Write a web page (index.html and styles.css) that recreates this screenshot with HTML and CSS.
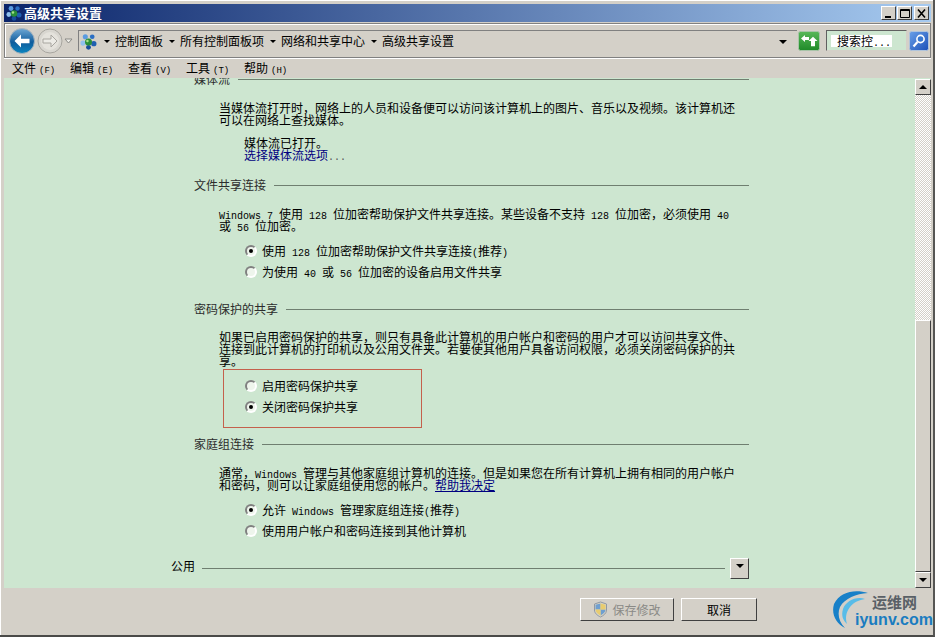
FILE: index.html
```html
<!DOCTYPE html>
<html lang="zh-CN">
<head>
  <meta charset="utf-8">
  <title>高级共享设置</title>
  <link rel="stylesheet" href="styles.css">
</head>
<body>
<div class="window">

  <div class="titlebar">
    <svg class="netIcon" width="16" height="16" viewBox="0 0 16 16">
      <circle cx="5" cy="3.500" r="2.400" fill="#5a9be0"/>
      <circle cx="11.500" cy="3.500" r="2.200" fill="#2b6fc4"/>
      <circle cx="2.800" cy="9.500" r="2.400" fill="#8fc0ee"/>
      <circle cx="13" cy="10" r="2.500" fill="#1f5fb0"/>
      <circle cx="8" cy="13.500" r="2.300" fill="#174f9c"/>
      <circle cx="8" cy="8.500" r="3.300" fill="#2a8f3a"/>
      <circle cx="7" cy="7.500" r="1.200" fill="#a6e08a"/>
    </svg>
    <span class="titleText">高级共享设置</span>
    <div class="winBtns">
      <span class="winBtn">
        <svg width="12" height="11" viewBox="0 0 12 11"><rect x="2" y="8" width="6" height="2" fill="#000"/></svg>
      </span>
      <span class="winBtn">
        <svg width="12" height="11" viewBox="0 0 12 11"><path d="M1.500 1.500h9v8h-9z M1 2.500h10" fill="none" stroke="#000"/></svg>
      </span>
      <span class="winBtn closeBtn">
        <svg width="12" height="11" viewBox="0 0 12 11"><path d="M2 1.500l7 8M9 1.500l-7 8" fill="none" stroke="#000" stroke-width="1.600"/></svg>
      </span>
    </div>
  </div>

  <div class="navbar">
    <svg class="backBtn" width="26" height="26" viewBox="0 0 26 26">
      <defs>
        <linearGradient id="blueBall" x1="0" y1="0" x2="0" y2="1">
          <stop offset="0" stop-color="#6fa8d4"/>
          <stop offset="0.55" stop-color="#0f5c9c"/>
          <stop offset="1" stop-color="#0c86c0"/>
        </linearGradient>
      </defs>
      <circle cx="13" cy="13" r="12.500" fill="url(#blueBall)" stroke="#a9b4bc"/>
      <path d="M5.500 13l6.500-6.500v4.300h8.500v4.400h-8.500v4.300z" fill="#fff"/>
    </svg>
    <svg class="fwdBtn" width="26" height="26" viewBox="0 0 26 26">
      <circle cx="13" cy="13" r="12" fill="#d8d6d0" stroke="#a8a6a0"/>
      <circle cx="13" cy="13" r="9" fill="#e4e2dc"/>
      <path d="M20 13l-6-6v4H6v4h8v4z" fill="#ecebe6" stroke="#a8a6a0"/>
    </svg>
    <svg class="histArrow" width="9" height="6" viewBox="0 0 9 6"><path d="M1 1l3.500 4L8 1z" fill="#f0efea" stroke="#8a8a86"/></svg>

    <div class="address">
      <svg class="netIcon" width="17" height="17" viewBox="0 0 16 16">
        <circle cx="5" cy="3.500" r="2.400" fill="#5a9be0"/>
        <circle cx="11.500" cy="3.500" r="2.200" fill="#2b6fc4"/>
        <circle cx="2.800" cy="9.500" r="2.400" fill="#8fc0ee"/>
        <circle cx="13" cy="10" r="2.500" fill="#1f5fb0"/>
        <circle cx="8" cy="13.500" r="2.300" fill="#174f9c"/>
        <circle cx="8" cy="8.500" r="3.300" fill="#2a8f3a"/>
        <circle cx="7" cy="7.500" r="1.200" fill="#a6e08a"/>
      </svg>
      <span class="crumbArrow first"></span><span class="crumb">控制面板</span>
      <span class="crumbArrow"></span><span class="crumb">所有控制面板项</span>
      <span class="crumbArrow"></span><span class="crumb">网络和共享中心</span>
      <span class="crumbArrow"></span><span class="crumb">高级共享设置</span>
      <span class="addrDrop"></span>
    </div>

    <svg class="refresh" width="22" height="20" viewBox="0 0 22 20">
      <defs>
        <linearGradient id="greenBtn" x1="0" y1="0" x2="0" y2="1">
          <stop offset="0" stop-color="#58b858"/>
          <stop offset="1" stop-color="#1f8a28"/>
        </linearGradient>
      </defs>
      <rect x="0.500" y="0.500" width="21" height="19" rx="2" fill="url(#greenBtn)" stroke="#a8c4a8"/>
      <path d="M3 7.500l4-3.500v2h4v3H7v2z" fill="#fff"/>
      <path d="M15 6l4.500 4.500H17V16h-4v-5.500h-2.500z" fill="#fff" transform="translate(0 0) scale(1 .95)"/>
    </svg>

    <div class="search"><span class="searchText">搜索控<span class="en">...</span></span></div>
    <svg class="searchBtn" width="20" height="20" viewBox="0 0 20 20">
      <defs>
        <linearGradient id="blueBtn" x1="0" y1="0" x2="1" y2="1">
          <stop offset="0" stop-color="#6aa0e8"/>
          <stop offset="1" stop-color="#1c50b8"/>
        </linearGradient>
      </defs>
      <rect x="0.500" y="0.500" width="19" height="19" rx="2" fill="url(#blueBtn)" stroke="#b0c4dc"/>
      <circle cx="11.500" cy="8" r="3.600" fill="#3a78d0" stroke="#fff" stroke-width="1.600"/>
      <path d="M8.500 11l-4 4.500" stroke="#fff" stroke-width="2.200"/>
    </svg>
  </div>

  <div class="menubar">
    <span class="menuItem">文件<span class="en key">(F)</span></span>
    <span class="menuItem">编辑<span class="en key">(E)</span></span>
    <span class="menuItem">查看<span class="en key">(V)</span></span>
    <span class="menuItem">工具<span class="en key">(T)</span></span>
    <span class="menuItem">帮助<span class="en key">(H)</span></span>
  </div>

  <div class="main">
    <div class="content">
      <div class="page">

        <section class="section">
          <div class="secHead"><span>媒体流</span><i class="rule"></i></div>
          <p class="desc">当媒体流打开时，网络上的人员和设备便可以访问该计算机上的图片、音乐以及视频。该计算机还<br>可以在网络上查找媒体。</p>
          <p class="status">媒体流已打开。<br><a class="link">选择媒体流选项<span class="en">...</span></a></p>
        </section>

        <section class="section">
          <div class="secHead"><span>文件共享连接</span><i class="rule"></i></div>
          <p class="desc"><span class="en">Windows 7 </span>使用<span class="en"> 128 </span>位加密帮助保护文件共享连接。某些设备不支持<span class="en"> 128 </span>位加密，必须使用<span class="en"> 40</span><br>或<span class="en"> 56 </span>位加密。</p>
          <div class="radios">
            <div class="radioRow"><span class="radio on"></span><span>使用<span class="en"> 128 </span>位加密帮助保护文件共享连接<span class="en">(</span>推荐<span class="en">)</span></span></div>
            <div class="radioRow"><span class="radio"></span><span>为使用<span class="en"> 40 </span>或<span class="en"> 56 </span>位加密的设备启用文件共享</span></div>
          </div>
        </section>

        <section class="section">
          <div class="secHead"><span>密码保护的共享</span><i class="rule"></i></div>
          <p class="desc tight">如果已启用密码保护的共享，则只有具备此计算机的用户帐户和密码的用户才可以访问共享文件、<br>连接到此计算机的打印机以及公用文件夹。若要使其他用户具备访问权限，必须关闭密码保护的共<br>享。</p>
          <div class="radios marked">
            <div class="radioRow"><span class="radio"></span><span>启用密码保护共享</span></div>
            <div class="radioRow"><span class="radio on"></span><span>关闭密码保护共享</span></div>
            <div class="redBox"></div>
          </div>
        </section>

        <section class="section">
          <div class="secHead"><span>家庭组连接</span><i class="rule"></i></div>
          <p class="desc">通常，<span class="en">Windows </span>管理与其他家庭组计算机的连接。但是如果您在所有计算机上拥有相同的用户帐户<br>和密码，则可以让家庭组使用您的帐户。<a class="link under">帮助我决定</a></p>
          <div class="radios">
            <div class="radioRow"><span class="radio on"></span><span>允许<span class="en"> Windows </span>管理家庭组连接<span class="en">(</span>推荐<span class="en">)</span></span></div>
            <div class="radioRow"><span class="radio"></span><span>使用用户帐户和密码连接到其他计算机</span></div>
          </div>
        </section>

        <div class="groupRow">
          <span>公用</span><i class="rule"></i>
          <span class="expand"><span class="arrowDown"></span></span>
        </div>
      </div>
    </div>

    <div class="scrollbar">
      <span class="scrollBtn"><span class="arrowUp"></span></span>
      <div class="track"></div>
      <div class="thumb"></div>
      <span class="scrollBtn"><span class="arrowDown"></span></span>
    </div>
  </div>

  <div class="footer">
    <button class="btn saveBtn" disabled>
      <svg width="15" height="17" viewBox="0 0 15 17">
        <path d="M7.500 1l6 2v6c0 3.500-3 5.500-6 7-3-1.500-6-3.500-6-7V3z" fill="#d8d4c4" stroke="#8f98a4"/>
        <path d="M7.500 2.500v6h-5V3.800z" fill="#6f9fd0"/>
        <path d="M7.500 8.500h5c0 2.800-2.500 4.600-5 6z" fill="#6f9fd0"/>
        <path d="M7.500 2.500l5 1.300v4.700h-5z" fill="#e8cc70"/>
        <path d="M7.500 8.500v6c-2.500-1.400-5-3.200-5-6z" fill="#e8cc70"/>
      </svg>
      保存修改
    </button>
    <button class="btn cancelBtn">取消</button>
  </div>

  <div class="watermark">
    <svg class="wmArc" width="44" height="44" viewBox="0 0 44 44">
      <path d="M36 3C24-1 8 1 2 14c-3 10 2 20 11 24C7 32 5 24 8 17 13 8 24 4 36 3z" fill="#1880c8"/>
      <path d="M33 9c-9-3-19 2-22 10-2 7 0 11 4 15-2-6-1-12 3-17 4-5 9-7 15-8z" fill="#58bce8"/>
    </svg>
    <span class="wmCn">运维网</span>
    <span class="wmEn">iyunv.com</span>
  </div>
</div>
</body>
</html>
```

FILE: styles.css
```css
html, body {
  margin: 0;
  padding: 0;
  height: 100%;
}

body {
  background: #d4d0c8;
  color: #000;
  font-family: "Noto Sans CJK SC", "Liberation Sans", sans-serif;
  font-size: 12px;
  line-height: 12px;
  overflow: hidden;
}

.en {
  font-family: "Liberation Mono", monospace;
  font-size: 10px;
  line-height: 0;
}

.window {
  position: relative;
  display: flex;
  flex-direction: column;
  width: 935px;
  height: 637px;
  box-sizing: border-box;
  padding: 4px 2px 3px 4px;
  border-bottom: 2px solid #4a4a48;
  border-right: 2px solid #565654;
  box-shadow: inset 1px 1px 0 #fff;
}

/* title bar */
.titlebar {
  display: flex;
  align-items: center;
  height: 18px;
  flex: none;
  padding-left: 2px;
  background: linear-gradient(to right, #0a246a, #a6caf0);
}

.titleText {
  margin-left: 2px;
  color: #fff;
  font-size: 13px;
  font-weight: bold;
}

.winBtns {
  display: flex;
  margin-left: auto;
  margin-right: 2px;
  gap: 1px;
}

.winBtn {
  display: flex;
  align-items: center;
  justify-content: center;
  width: 15px;
  height: 14px;
  box-sizing: border-box;
  background: #d4d0c8;
  border: 1px solid;
  border-color: #fff #404040 #404040 #fff;
}

.closeBtn {
  margin-left: 1px;
}

/* address row */
.navbar {
  display: flex;
  align-items: center;
  height: 35px;
  flex: none;
  margin-top: 1px;
  box-sizing: border-box;
  padding-left: 4px;
  border: 1px solid #808080;
  box-shadow: inset 1px 1px 0 #fff, 0 1px 0 #fff;
}

.fwdBtn {
  margin-left: 2px;
}

.histArrow {
  margin-left: 1px;
}

.address {
  display: flex;
  align-items: center;
  width: 719px;
  height: 21px;
  margin-left: 5px;
  box-sizing: border-box;
  padding-left: 1px;
  border-left: 1px solid #808080;
  border-top: 1px solid #808080;
}

.crumbArrow {
  width: 0;
  height: 0;
  margin: 1px 5px 0 6px;
  border-left: 3px solid transparent;
  border-right: 3px solid transparent;
  border-top: 3px solid #000;
}

.crumbArrow.first {
  margin-left: 7px;
}

.addrDrop {
  width: 0;
  height: 0;
  margin: 1px 10px 0 auto;
  border-left: 4px solid transparent;
  border-right: 4px solid transparent;
  border-top: 4px solid #000;
}

.refresh {
  margin-left: 1px;
}

.search {
  display: flex;
  align-items: center;
  width: 81px;
  height: 21px;
  margin-left: 6px;
  box-sizing: border-box;
  padding-left: 4px;
  background: #cde6d0;
  border: 1px solid;
  border-color: #606060 #d4d0c8 #d4d0c8 #606060;
}

.searchText {
  width: 55px;
  height: 12px;
  padding-left: 6px;
  background: #fff;
  white-space: nowrap;
}

.searchBtn {
  margin-left: 2px;
}

/* menu */
.menubar {
  display: flex;
  align-items: center;
  height: 20px;
  flex: none;
  padding-left: 8px;
}

.menuItem {
  width: 58px;
  white-space: nowrap;
}

.key {
  margin-left: 3px;
  font-size: 9px;
}

/* main area */
.main {
  display: flex;
  flex: 1;
  min-height: 0;
}

.content {
  flex: 1;
  overflow: hidden;
  background: #cde6d0;
}

.page {
  width: 578px;
  margin: -5px 0 0 167px;
}

.section {
  padding-left: 23px;
  margin-bottom: 18px;
}

.section + .section {
  margin-bottom: 21px;
}

.secHead {
  display: flex;
  align-items: center;
  color: #2c2c2c;
}

.rule {
  flex: 1;
  height: 1px;
  margin-left: 8px;
  background: #6f7f70;
}

.desc {
  margin: 17px 0 0 25px;
  white-space: nowrap;
}

.desc.tight {
  margin-top: 16px;
}

.status {
  margin: 11px 0 0 50px;
}

.link {
  color: #000080;
}

.link .en {
  color: #555;
}

.link.under {
  text-decoration: underline;
}

.radios {
  position: relative;
  margin: 8px 0 0 51px;
}

.radioRow {
  display: flex;
  align-items: center;
  gap: 5px;
  height: 21px;
  white-space: nowrap;
}

.radio {
  position: relative;
  width: 12px;
  height: 12px;
  box-sizing: border-box;
  border: 2px solid;
  border-color: #808080 #fff #fff #808080;
  border-radius: 50%;
  background: #eef5ec;
}

.radio.on::after {
  content: "";
  position: absolute;
  left: 2px;
  top: 2px;
  width: 4px;
  height: 4px;
  border-radius: 50%;
  background: #000;
}

.redBox {
  position: absolute;
  left: -22px;
  top: -6px;
  width: 197px;
  height: 57px;
  border: 1px solid #c4604c;
}

.groupRow {
  display: flex;
  align-items: center;
  height: 21px;
  margin-top: -4px;
}

.groupRow span:first-child {
  margin-top: -6px;
}

.groupRow .rule {
  margin-left: 7px;
}

.expand {
  display: flex;
  align-items: center;
  justify-content: center;
  width: 19px;
  height: 21px;
  margin-left: 5px;
  box-sizing: border-box;
  background: #d4d0c8;
  border: 1px solid;
  border-color: #fff #404040 #404040 #fff;
}

.arrowDown, .arrowUp {
  width: 0;
  height: 0;
  border-left: 4px solid transparent;
  border-right: 4px solid transparent;
}

.arrowDown {
  border-top: 4px solid #000;
}

.arrowUp {
  border-bottom: 4px solid #000;
}

/* scrollbar */
.scrollbar {
  display: flex;
  flex-direction: column;
  width: 16px;
  flex: none;
  padding-top: 1px;
  background: #cde6d0;
}

.scrollBtn {
  display: flex;
  align-items: center;
  justify-content: center;
  height: 16px;
  flex: none;
  box-sizing: border-box;
  background: #d4d0c8;
  border: 1px solid;
  border-color: #fff #404040 #404040 #fff;
}

.track {
  height: 225px;
  flex: none;
  background: repeating-conic-gradient(#d4d0c8 0 25%, #fff 0 50%) 0 0 / 2px 2px;
}

.thumb {
  flex: 1;
  background: #d4d0c8;
  box-sizing: border-box;
  border: 1px solid;
  border-color: #fff #404040 #404040 #fff;
}

/* bottom buttons */
.footer {
  display: flex;
  align-items: flex-start;
  gap: 7px;
  height: 44px;
  flex: none;
  padding: 10px 0 0 576px;
  box-sizing: border-box;
}

.btn {
  display: flex;
  align-items: center;
  justify-content: center;
  gap: 4px;
  height: 23px;
  padding: 0;
  background: #d4d0c8;
  font: inherit;
  color: #000;
  border: 1px solid;
  border-color: #fff #404040 #404040 #fff;
}

.saveBtn {
  width: 94px;
  color: #8a8a86;
}

.cancelBtn {
  width: 76px;
}

/* watermark over the corner of the window */
.watermark {
  position: absolute;
  left: 832px;
  top: 590px;
  width: 100px;
  height: 44px;
}

.wmArc {
  position: absolute;
  left: 0;
  top: 0;
}

.wmCn {
  position: absolute;
  left: 40px;
  top: 4px;
  color: #5a6066;
  font-size: 15px;
  line-height: 16px;
  font-weight: bold;
}

.wmEn {
  position: absolute;
  left: 23px;
  top: 21px;
  color: #1a7cc0;
  font-family: "Liberation Sans", sans-serif;
  font-size: 16px;
  line-height: 18px;
  font-weight: bold;
}
```
